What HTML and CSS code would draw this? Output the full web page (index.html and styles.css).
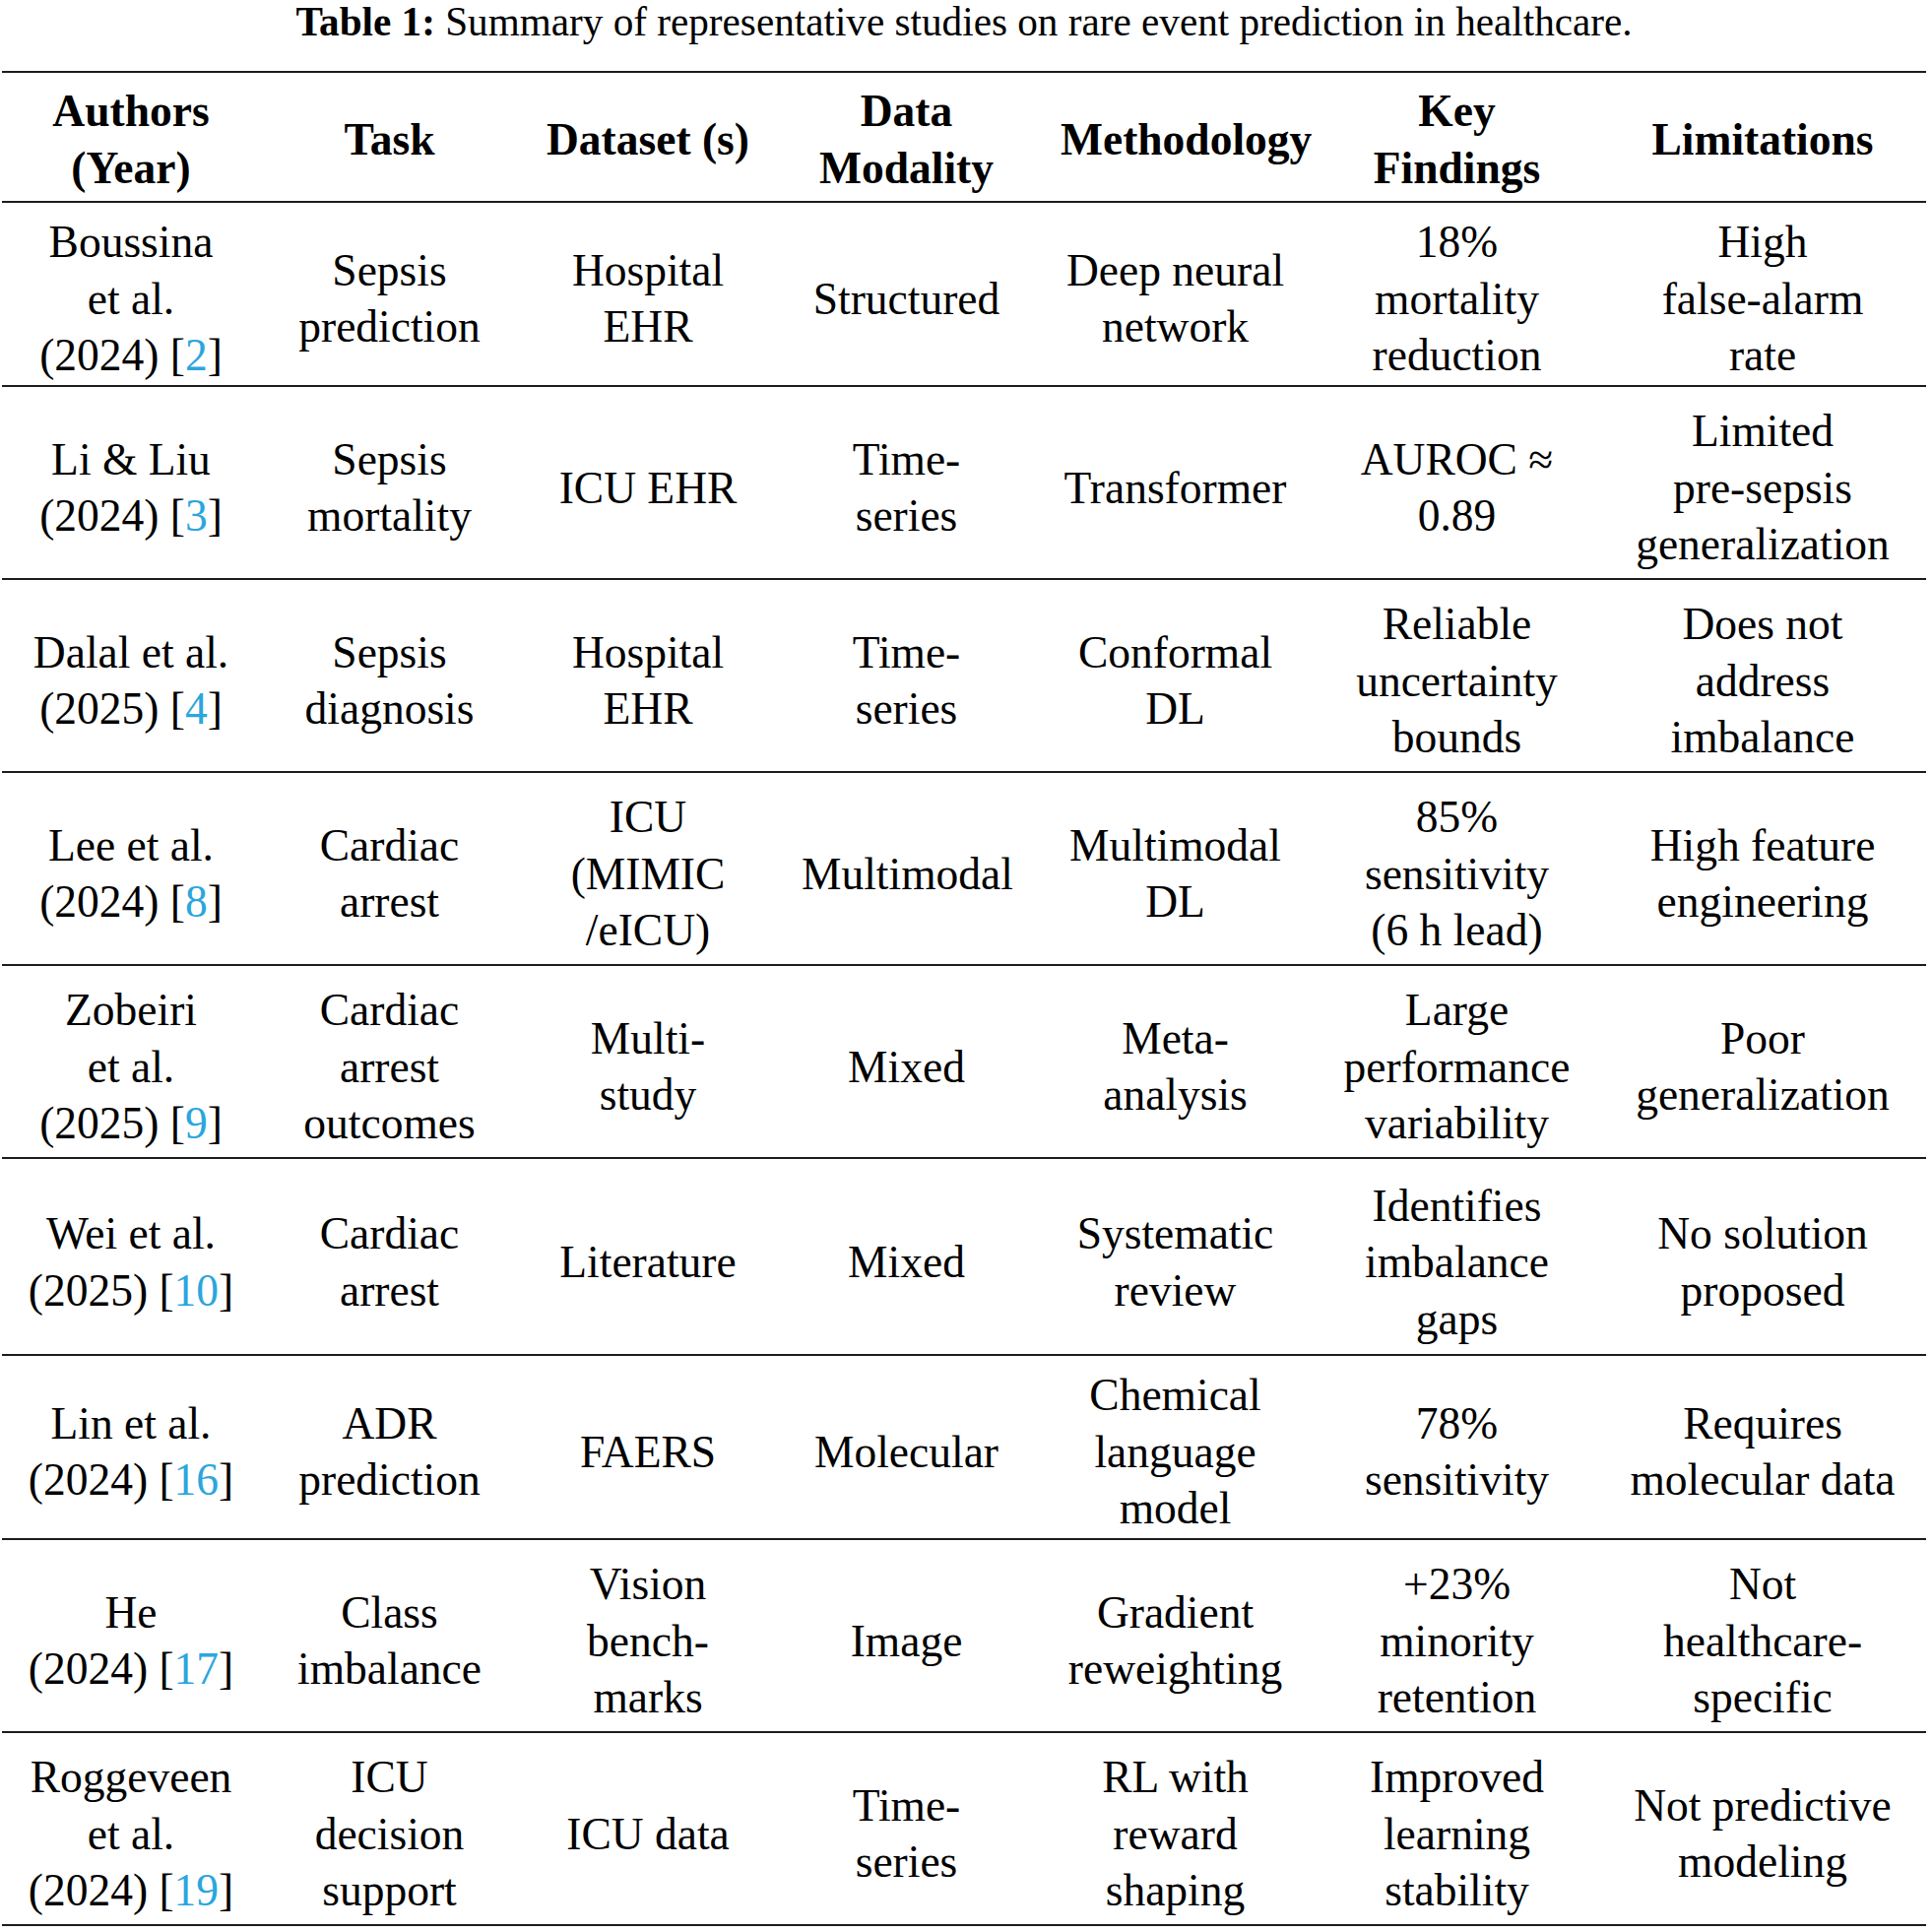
FILE: index.html
```html
<!DOCTYPE html>
<html>
<head>
<meta charset="utf-8">
<link rel="stylesheet" href="styles.css">
</head>
<body>
<div class="page">
  <p class="caption"><b>Table 1:</b> Summary of representative studies on rare event prediction in healthcare.</p>
  <table class="studies">
    <colgroup>
      <col class="c-auth"><col class="c-task"><col class="c-data"><col class="c-mod"><col class="c-meth"><col class="c-key"><col class="c-lim">
    </colgroup>
    <thead>
      <tr>
        <th>Authors<br>(Year)</th>
        <th>Task</th>
        <th>Dataset (s)</th>
        <th>Data<br>Modality</th>
        <th>Methodology</th>
        <th>Key<br>Findings</th>
        <th>Limitations</th>
      </tr>
    </thead>
    <tbody>
      <tr class="tight">
        <td>Boussina<br>et al.<br>(2024) [<a class="ref">2</a>]</td>
        <td>Sepsis<br>prediction</td>
        <td>Hospital<br>EHR</td>
        <td>Structured</td>
        <td>Deep neural<br>network</td>
        <td>18%<br>mortality<br>reduction</td>
        <td>High<br>false-alarm<br>rate</td>
      </tr>
      <tr>
        <td>Li &amp; Liu<br>(2024) [<a class="ref">3</a>]</td>
        <td>Sepsis<br>mortality</td>
        <td>ICU EHR</td>
        <td>Time-<br>series</td>
        <td>Transformer</td>
        <td>AUROC ≈<br>0.89</td>
        <td>Limited<br>pre-sepsis<br>generalization</td>
      </tr>
      <tr>
        <td>Dalal et al.<br>(2025) [<a class="ref">4</a>]</td>
        <td>Sepsis<br>diagnosis</td>
        <td>Hospital<br>EHR</td>
        <td>Time-<br>series</td>
        <td>Conformal<br>DL</td>
        <td>Reliable<br>uncertainty<br>bounds</td>
        <td>Does not<br>address<br>imbalance</td>
      </tr>
      <tr>
        <td>Lee et al.<br>(2024) [<a class="ref">8</a>]</td>
        <td>Cardiac<br>arrest</td>
        <td>ICU<br>(MIMIC<br>/eICU)</td>
        <td>Multimodal</td>
        <td>Multimodal<br>DL</td>
        <td>85%<br>sensitivity<br>(6 h lead)</td>
        <td>High feature<br>engineering</td>
      </tr>
      <tr>
        <td>Zobeiri<br>et al.<br>(2025) [<a class="ref">9</a>]</td>
        <td>Cardiac<br>arrest<br>outcomes</td>
        <td>Multi-<br>study</td>
        <td>Mixed</td>
        <td>Meta-<br>analysis</td>
        <td>Large<br>performance<br>variability</td>
        <td>Poor<br>generalization</td>
      </tr>
      <tr class="loose">
        <td>Wei et al.<br>(2025) [<a class="ref">10</a>]</td>
        <td>Cardiac<br>arrest</td>
        <td>Literature</td>
        <td>Mixed</td>
        <td>Systematic<br>review</td>
        <td>Identifies<br>imbalance<br>gaps</td>
        <td>No solution<br>proposed</td>
      </tr>
      <tr class="tight">
        <td>Lin et al.<br>(2024) [<a class="ref">16</a>]</td>
        <td>ADR<br>prediction</td>
        <td>FAERS</td>
        <td>Molecular</td>
        <td>Chemical<br>language<br>model</td>
        <td>78%<br>sensitivity</td>
        <td>Requires<br>molecular data</td>
      </tr>
      <tr>
        <td>He<br>(2024) [<a class="ref">17</a>]</td>
        <td>Class<br>imbalance</td>
        <td>Vision<br>bench-<br>marks</td>
        <td>Image</td>
        <td>Gradient<br>reweighting</td>
        <td>+23%<br>minority<br>retention</td>
        <td>Not<br>healthcare-<br>specific</td>
      </tr>
      <tr>
        <td>Roggeveen<br>et al.<br>(2024) [<a class="ref">19</a>]</td>
        <td>ICU<br>decision<br>support</td>
        <td>ICU data</td>
        <td>Time-<br>series</td>
        <td>RL with<br>reward<br>shaping</td>
        <td>Improved<br>learning<br>stability</td>
        <td>Not predictive<br>modeling</td>
      </tr>
    </tbody>
  </table>
</div>
</body>
</html>
```

FILE: styles.css
```css
html, body {
  margin: 0;
  padding: 0;
  background: #ffffff;
}

body {
  font-family: "Liberation Serif", "Times New Roman", serif;
  color: #000000;
}

.page {
  padding-left: 2px;
  width: 1956px;
}

.caption {
  margin: 0 0 26.5px 0;
  width: 1954px;
  text-align: center;
  font-size: 41.2px;
  line-height: 45px;
  white-space: nowrap;
}

.studies {
  border-collapse: separate;
  border-spacing: 0;
  table-layout: fixed;
  width: 1954px;
  font-size: 45.5px;
  line-height: 57.5px;
}

.c-auth { width: 262px; }
.c-task { width: 263px; }
.c-data { width: 262px; }
.c-mod  { width: 263px; }
.c-meth { width: 283px; }
.c-key  { width: 289px; }
.c-lim  { width: 332px; }

.studies th,
.studies td {
  padding: 16.5px 25px 5px;
  text-align: center;
  vertical-align: middle;
  white-space: nowrap;
  border-bottom: 2px solid #1c1c1c;
}

.studies th {
  font-weight: bold;
  border-top: 2px solid #1c1c1c;
  padding-top: 10.5px;
  padding-bottom: 5px;
}

.studies tr.tight td {
  padding-top: 11px;
  padding-bottom: 1px;
}

.studies tr.loose td {
  padding-top: 19px;
  padding-bottom: 7px;
}

.ref {
  color: #2ba6dd;
  text-decoration: none;
}
```
